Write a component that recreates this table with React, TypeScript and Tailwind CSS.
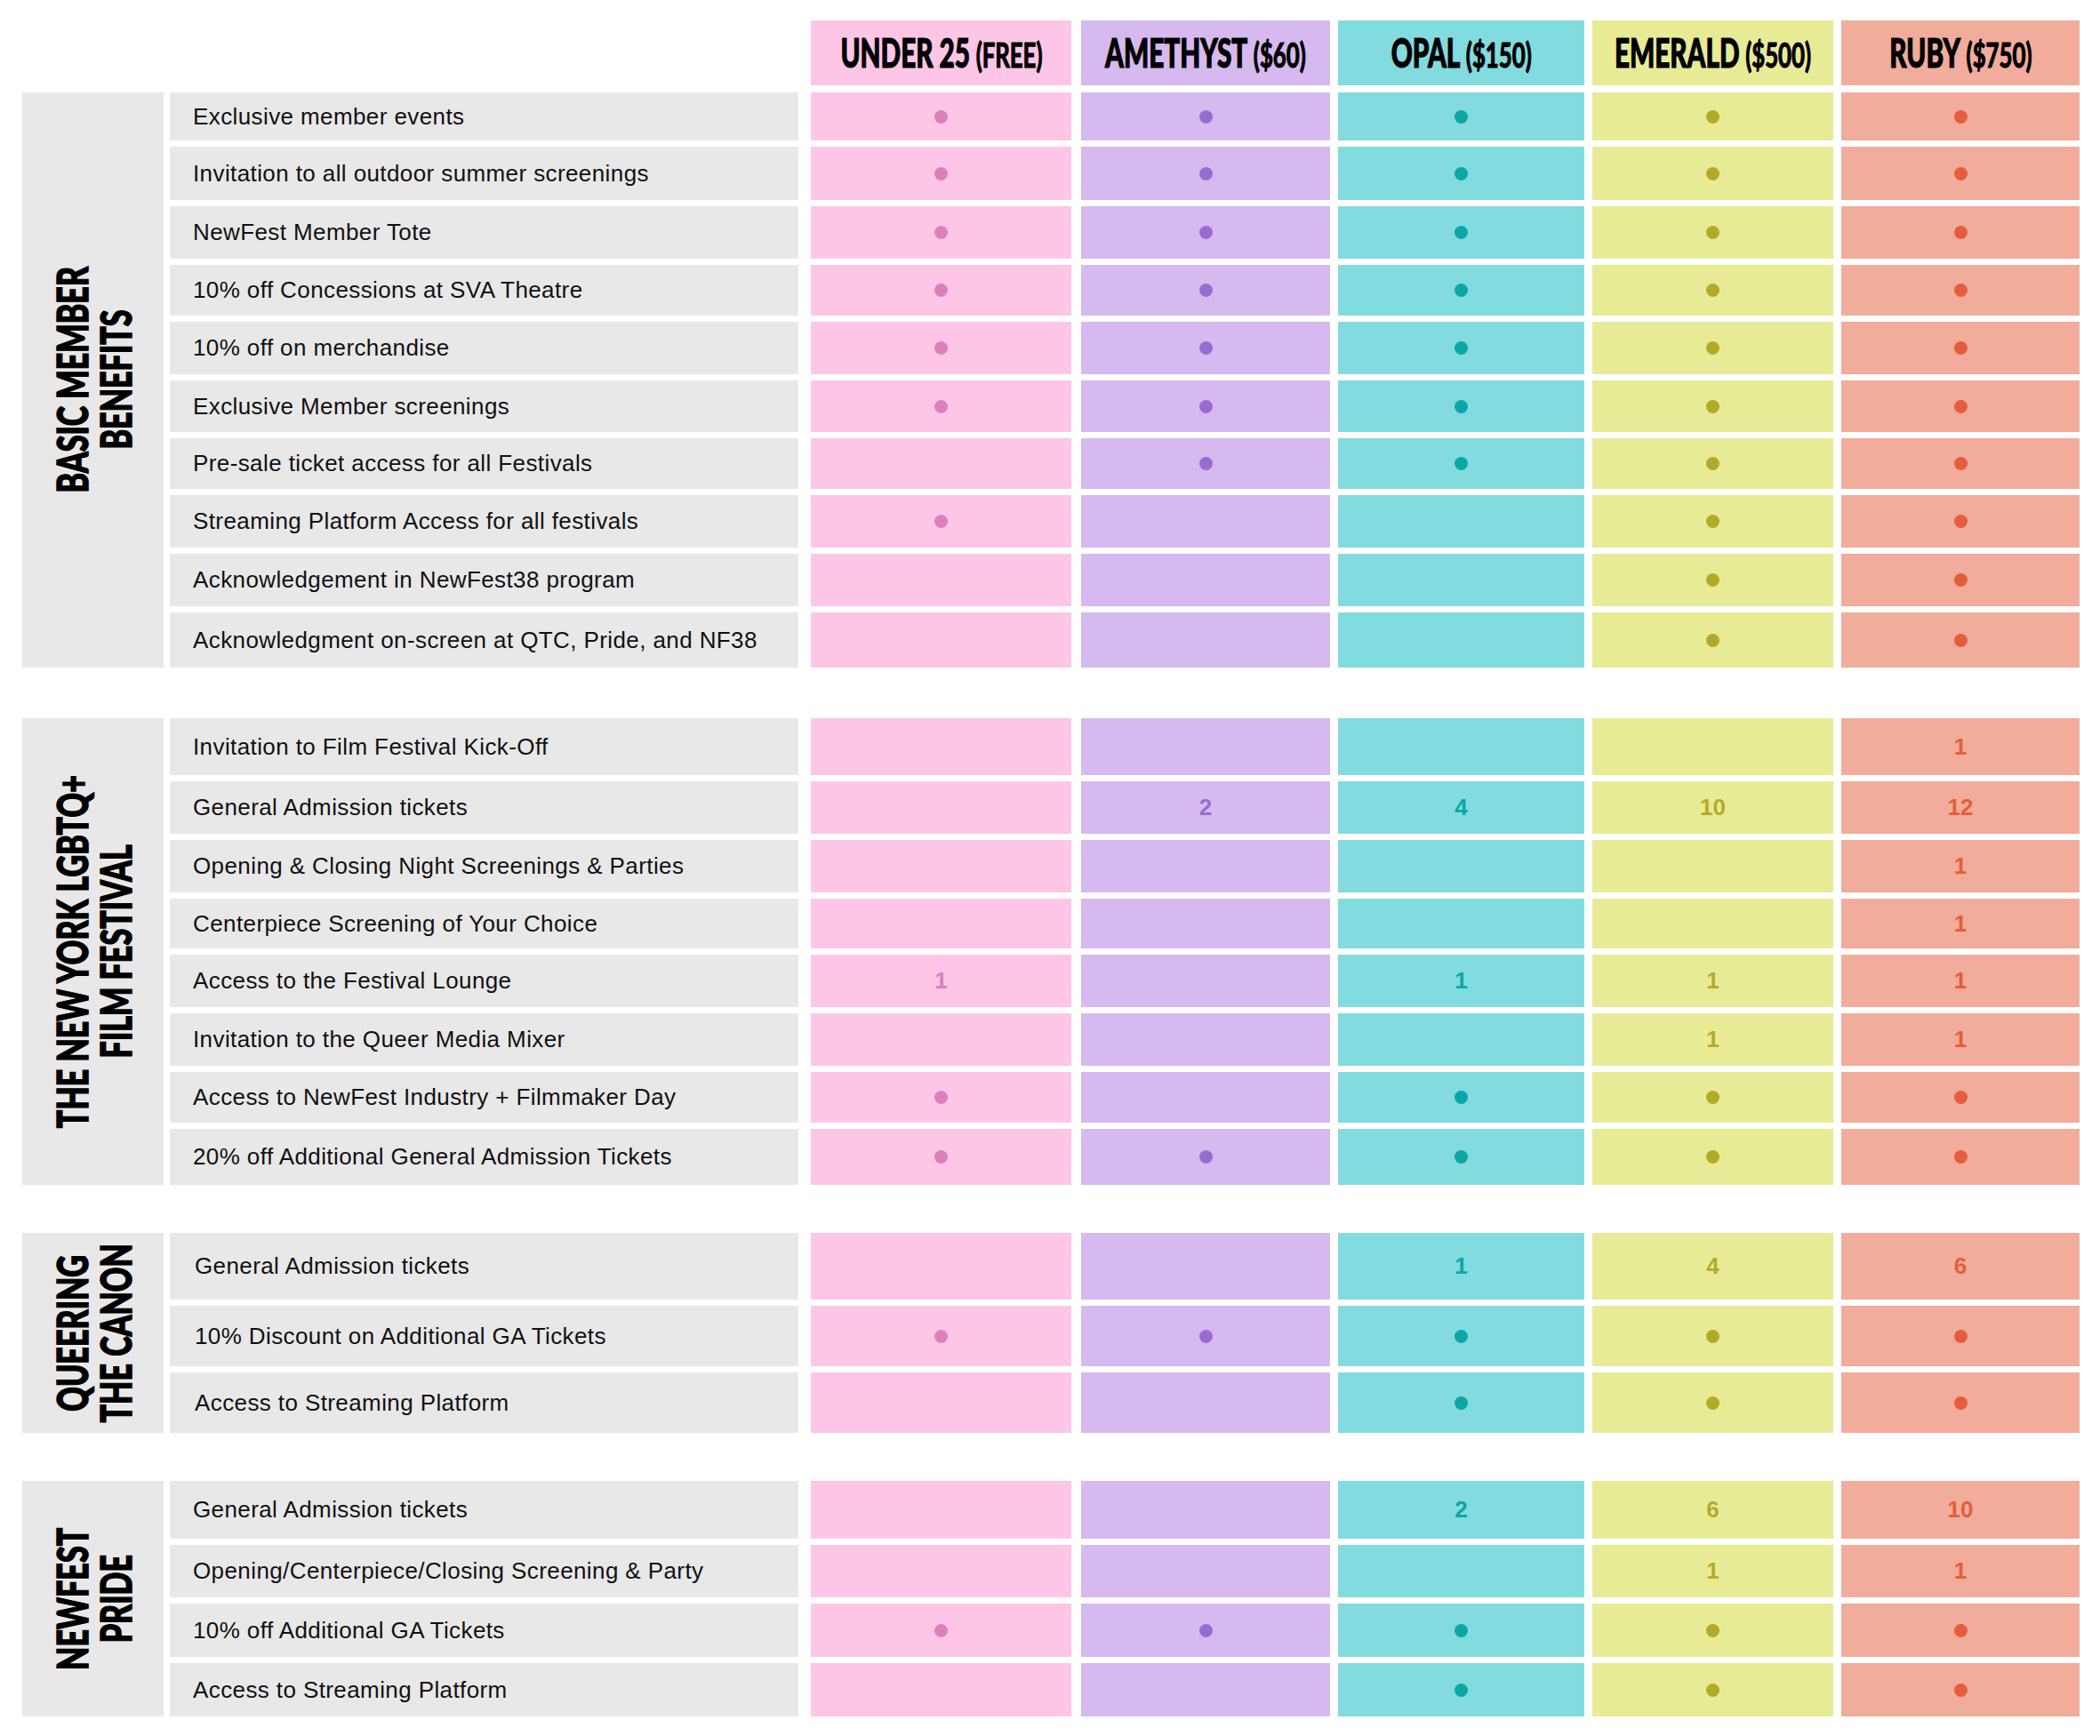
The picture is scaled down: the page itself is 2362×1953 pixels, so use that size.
import React from "react";

type Val = null | "dot" | string;

const COLS = [
  { name: "UNDER 25", price: "(FREE)", bg: "bg-[#fdc6e6]", fg: "text-[#dc80ba]", dot: "bg-[#dc80ba]", w: "w-[293px]", ml: "ml-[14px]" },
  { name: "AMETHYST", price: "($60)", bg: "bg-[#d5b9ef]", fg: "text-[#9a6cd0]", dot: "bg-[#9a6cd0]", w: "w-[280px]", ml: "ml-[11px]" },
  { name: "OPAL", price: "($150)", bg: "bg-[#82dbdf]", fg: "text-[#0ba6a6]", dot: "bg-[#0ba6a6]", w: "w-[277px]", ml: "ml-[9px]" },
  { name: "EMERALD", price: "($500)", bg: "bg-[#e8eb96]", fg: "text-[#b3ab28]", dot: "bg-[#b3ab28]", w: "w-[271px]", ml: "ml-[9px]" },
  { name: "RUBY", price: "($750)", bg: "bg-[#f1ac9b]", fg: "text-[#e55d3d]", dot: "bg-[#e55d3d]", w: "w-[268px]", ml: "ml-[9px]" },
];

const D = "dot" as const;
const _ = null;

type Row = { label: string; h: string; vals: Val[] };
type Sec = { title: string[]; mt: string; pad: string; rows: Row[] };

const SECTIONS: Sec[] = [
  {
    title: ["BASIC MEMBER", "BENEFITS"],
    mt: "mt-[8px]",
    pad: "pl-[26px]",
    rows: [
      { label: "Exclusive member events", h: "h-[54px]", vals: [D, D, D, D, D] },
      { label: "Invitation to all outdoor summer screenings", h: "h-[60px]", vals: [D, D, D, D, D] },
      { label: "NewFest Member Tote", h: "h-[59px]", vals: [D, D, D, D, D] },
      { label: "10% off Concessions at SVA Theatre", h: "h-[57px]", vals: [D, D, D, D, D] },
      { label: "10% off on merchandise", h: "h-[59px]", vals: [D, D, D, D, D] },
      { label: "Exclusive Member screenings", h: "h-[58px]", vals: [D, D, D, D, D] },
      { label: "Pre-sale ticket access for all Festivals", h: "h-[57px]", vals: [_, D, D, D, D] },
      { label: "Streaming Platform Access for all festivals", h: "h-[59px]", vals: [D, _, _, D, D] },
      { label: "Acknowledgement in NewFest38 program", h: "h-[59px]", vals: [_, _, _, D, D] },
      { label: "Acknowledgment on-screen at QTC, Pride, and NF38", h: "h-[62px]", vals: [_, _, _, D, D] },
    ],
  },
  {
    title: ["THE NEW YORK LGBTQ+", "FILM FESTIVAL"],
    mt: "mt-[57px]",
    pad: "pl-[26px]",
    rows: [
      { label: "Invitation to Film Festival Kick-Off", h: "h-[64px]", vals: [_, _, _, _, "1"] },
      { label: "General Admission tickets", h: "h-[59px]", vals: [_, "2", "4", "10", "12"] },
      { label: "Opening & Closing Night Screenings & Parties", h: "h-[59px]", vals: [_, _, _, _, "1"] },
      { label: "Centerpiece Screening of Your Choice", h: "h-[56px]", vals: [_, _, _, _, "1"] },
      { label: "Access to the Festival Lounge", h: "h-[59px]", vals: ["1", _, "1", "1", "1"] },
      { label: "Invitation to the Queer Media Mixer", h: "h-[59px]", vals: [_, _, _, "1", "1"] },
      { label: "Access to NewFest Industry + Filmmaker Day", h: "h-[57px]", vals: [D, _, D, D, D] },
      { label: "20% off Additional General Admission Tickets", h: "h-[63px]", vals: [D, D, D, D, D] },
    ],
  },
  {
    title: ["QUEERING", "THE CANON"],
    mt: "mt-[54px]",
    pad: "pl-[28px]",
    rows: [
      { label: "General Admission tickets", h: "h-[75px]", vals: [_, _, "1", "4", "6"] },
      { label: "10% Discount on Additional GA Tickets", h: "h-[68px]", vals: [D, D, D, D, D] },
      { label: "Access to Streaming Platform", h: "h-[68px]", vals: [_, _, D, D, D] },
    ],
  },
  {
    title: ["NEWFEST", "PRIDE"],
    mt: "mt-[54px]",
    pad: "pl-[26px]",
    rows: [
      { label: "General Admission tickets", h: "h-[65px]", vals: [_, _, "2", "6", "10"] },
      { label: "Opening/Centerpiece/Closing Screening & Party", h: "h-[59px]", vals: [_, _, _, "1", "1"] },
      { label: "10% off Additional GA Tickets", h: "h-[60px]", vals: [D, D, D, D, D] },
      { label: "Access to Streaming Platform", h: "h-[60px]", vals: [_, _, D, D, D] },
    ],
  },
];

function Header() {
  return (
    <div className="flex h-[73px]">
      <div className="w-[873px] shrink-0" />
      {COLS.map((c) => (
        <div
          key={c.name}
          className={`${c.w} ${c.ml} ${c.bg} shrink-0 flex items-center justify-center overflow-visible`}
        >
          <span className="inline-block whitespace-nowrap scale-x-[0.66] [font-family:Lato,'Liberation_Sans',sans-serif] text-black [-webkit-text-stroke:1.2px_black]">
            <span className="font-black text-[45px]">{c.name}</span>
            <span className="font-bold text-[39px] ml-[10px]">{c.price}</span>
          </span>
        </div>
      ))}
    </div>
  );
}

function Section({ sec }: { sec: Sec }) {
  return (
    <div className={`flex ${sec.mt}`}>
      {/* section title, rotated so it reads bottom to top */}
      <div className="relative w-[159px] shrink-0 bg-[#e8e8e8]">
        <div className="absolute inset-0 flex items-center justify-center">
          <div className="[writing-mode:vertical-rl] rotate-180 scale-y-[0.71] whitespace-nowrap text-center font-black text-[48px] leading-[49px] text-black [font-family:Lato,'Liberation_Sans',sans-serif] [-webkit-text-stroke:1.5px_black]">
            {sec.title.map((t, i) => (
              <React.Fragment key={t}>
                {i > 0 && <br />}
                {t}
              </React.Fragment>
            ))}
          </div>
        </div>
      </div>
      <div className="ml-[7px] flex flex-col gap-[7px]">
        {sec.rows.map((r) => (
          <div key={r.label} className={`flex ${r.h}`}>
            <div
              className={`w-[707px] shrink-0 bg-[#e8e8e8] flex items-center ${sec.pad} text-[26px] tracking-[0.4px] text-[#111] [font-family:'Liberation_Sans',Arial,sans-serif]`}
            >
              {r.label}
            </div>
            {r.vals.map((v, i) => {
              const c = COLS[i];
              return (
                <div
                  key={i}
                  className={`${c.w} ${c.ml} ${c.bg} shrink-0 flex items-center justify-center`}
                >
                  {v === "dot" && <span className={`block w-[15px] h-[15px] rounded-full ${c.dot}`} />}
                  {v !== null && v !== "dot" && (
                    <span className={`text-[26px] font-bold ${c.fg} [font-family:'Liberation_Sans',Arial,sans-serif]`}>
                      {v}
                    </span>
                  )}
                </div>
              );
            })}
          </div>
        ))}
      </div>
    </div>
  );
}

export default function App() {
  return (
    <div className="w-[2362px] h-[1953px] bg-white pt-[23px] pl-[25px] overflow-hidden">
      <Header />
      {SECTIONS.map((s) => (
        <Section key={s.title[0]} sec={s} />
      ))}
    </div>
  );
}
